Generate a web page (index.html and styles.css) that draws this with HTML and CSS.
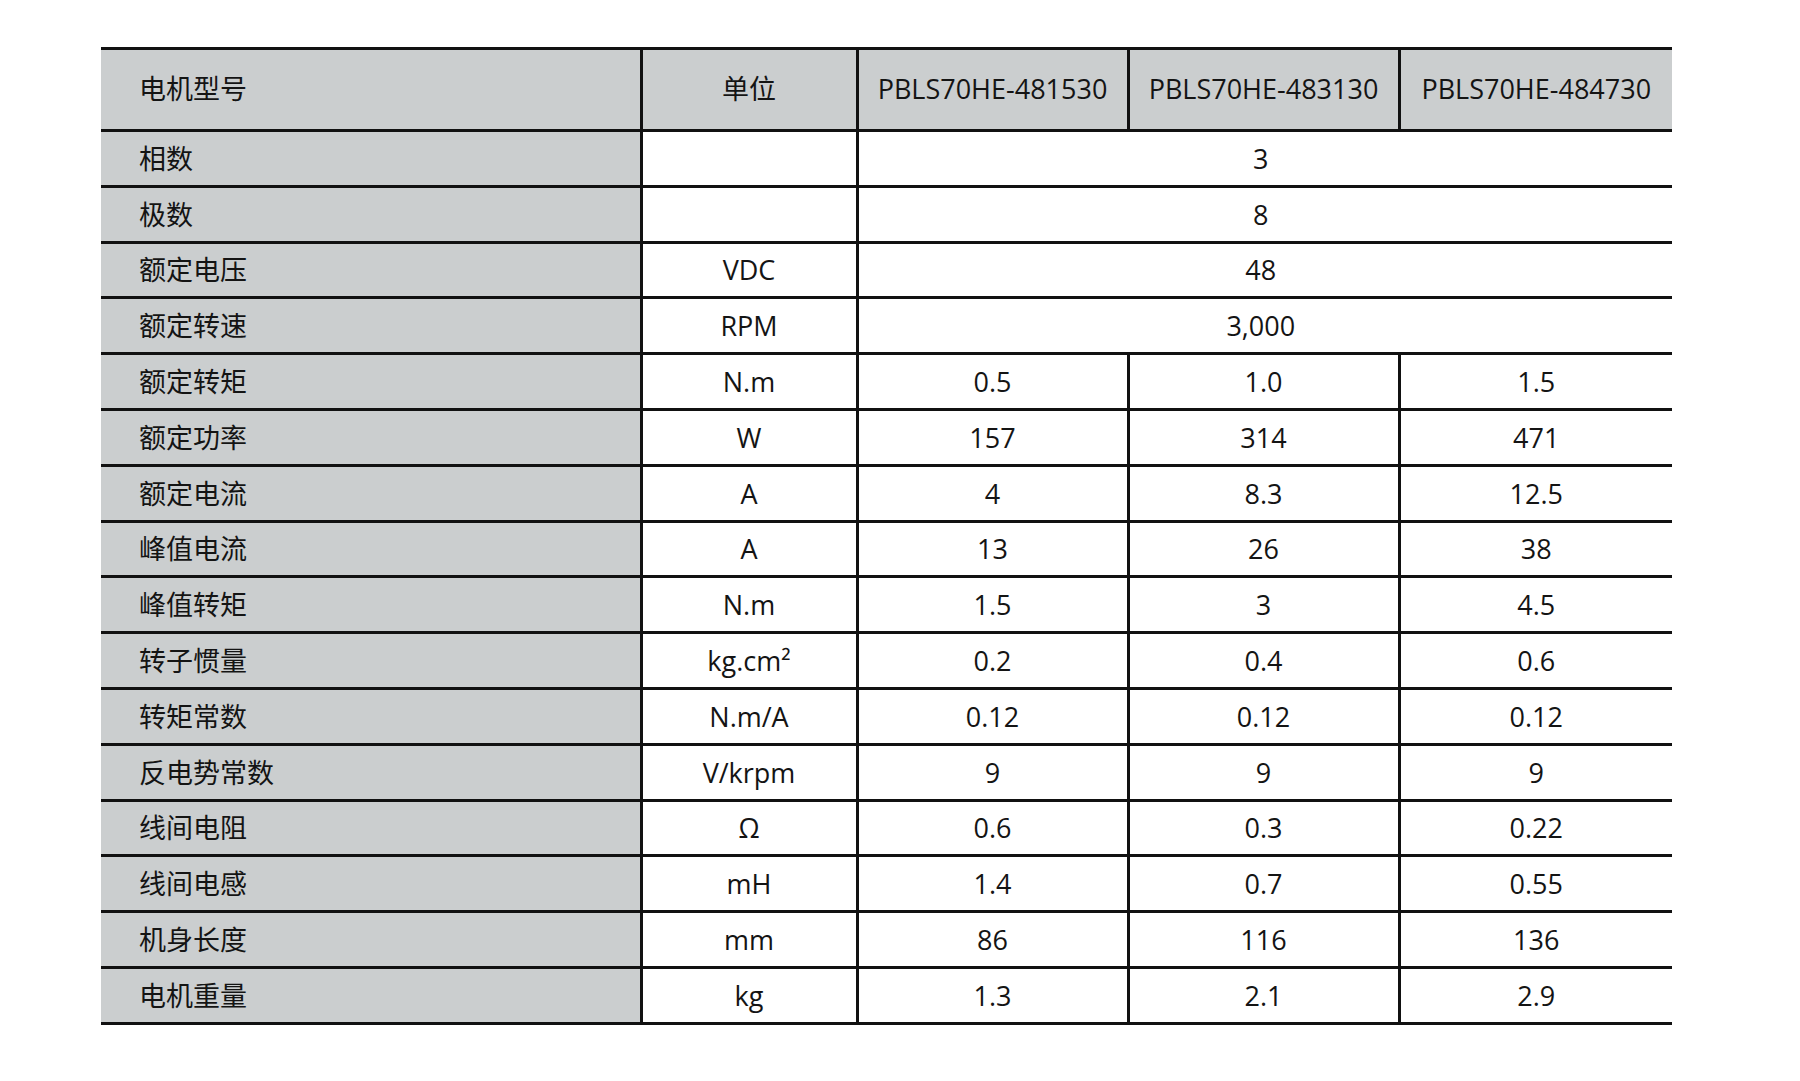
FILE: index.html
```html
<!DOCTYPE html>
<html lang="zh-CN">
<head>
<meta charset="utf-8">
<title>电机参数表</title>
<link rel="stylesheet" href="styles.css">
</head>
<body>
<table class="spec">
  <colgroup>
    <col class="c-name">
    <col class="c-unit">
    <col class="c-val">
    <col class="c-val">
    <col class="c-val last">
  </colgroup>
  <thead>
    <tr class="head">
      <th class="name">电机型号</th>
      <th>单位</th>
      <th>PBLS70HE-481530</th>
      <th>PBLS70HE-483130</th>
      <th>PBLS70HE-484730</th>
    </tr>
  </thead>
  <tbody>
    <tr><td class="name">相数</td><td></td><td class="span" colspan="3">3</td></tr>
    <tr><td class="name">极数</td><td></td><td class="span" colspan="3">8</td></tr>
    <tr><td class="name">额定电压</td><td>VDC</td><td class="span" colspan="3">48</td></tr>
    <tr><td class="name">额定转速</td><td>RPM</td><td class="span" colspan="3">3,000</td></tr>
    <tr><td class="name">额定转矩</td><td>N.m</td><td>0.5</td><td>1.0</td><td>1.5</td></tr>
    <tr><td class="name">额定功率</td><td>W</td><td>157</td><td>314</td><td>471</td></tr>
    <tr><td class="name">额定电流</td><td>A</td><td>4</td><td>8.3</td><td>12.5</td></tr>
    <tr><td class="name">峰值电流</td><td>A</td><td>13</td><td>26</td><td>38</td></tr>
    <tr><td class="name">峰值转矩</td><td>N.m</td><td>1.5</td><td>3</td><td>4.5</td></tr>
    <tr><td class="name">转子惯量</td><td>kg.cm²</td><td>0.2</td><td>0.4</td><td>0.6</td></tr>
    <tr><td class="name">转矩常数</td><td>N.m/A</td><td>0.12</td><td>0.12</td><td>0.12</td></tr>
    <tr><td class="name">反电势常数</td><td>V/krpm</td><td>9</td><td>9</td><td>9</td></tr>
    <tr><td class="name">线间电阻</td><td>Ω</td><td>0.6</td><td>0.3</td><td>0.22</td></tr>
    <tr><td class="name">线间电感</td><td>mH</td><td>1.4</td><td>0.7</td><td>0.55</td></tr>
    <tr><td class="name">机身长度</td><td>mm</td><td>86</td><td>116</td><td>136</td></tr>
    <tr><td class="name">电机重量</td><td>kg</td><td>1.3</td><td>2.1</td><td>2.9</td></tr>
  </tbody>
</table>
</body>
</html>
```

FILE: styles.css
```css
html, body {
  margin: 0;
  padding: 0;
  background: #ffffff;
}

body {
  font-family: "Open Sans", "Noto Sans CJK SC", sans-serif;
  color: #141414;
  padding: 47px 0 0 101px;
}

.spec {
  border-collapse: collapse;
  table-layout: fixed;
  width: 1571px;
  font-size: 27px;
  border-top: 3.5px solid #0d0d0d;
  border-bottom: 3.5px solid #0d0d0d;
}

.c-name { width: 540px; }
.c-unit { width: 216px; }
.c-val { width: 271px; }
.c-val.last { width: 273px; }

.spec th,
.spec td {
  padding: 0;
  text-align: center;
  vertical-align: middle;
  font-weight: normal;
  border: 3px solid #111111;
  line-height: 1;
}

.spec th:first-child,
.spec td:first-child {
  border-left: none;
}

.spec th:last-child,
.spec td:last-child {
  border-right: none;
}

.head {
  height: 82px;
}

.head th {
  background: #cbcecf;
  padding-bottom: 2px;
}

.spec tbody tr {
  height: 55.8px;
}

.spec tbody td {
  padding-top: 0;
}

.spec tbody td.span {
  padding-right: 9px;
}

.spec .name {
  background: #cbcecf;
  text-align: left;
  padding-left: 38px;
}
```
